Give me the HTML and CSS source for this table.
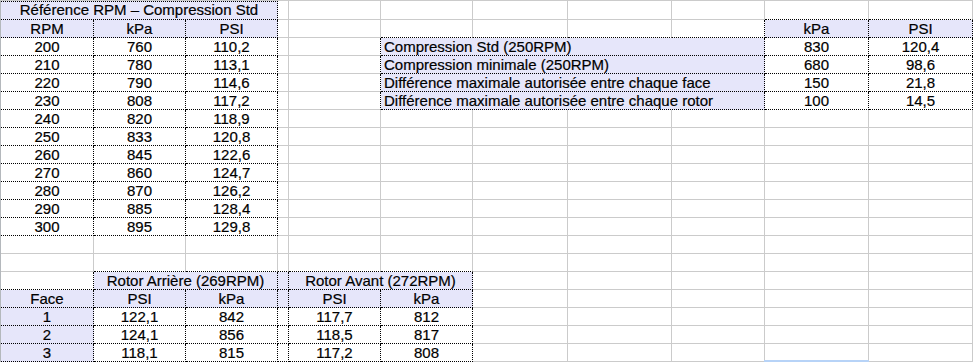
FILE: index.html
```html
<!DOCTYPE html>
<html lang="fr">
<head>
<meta charset="utf-8">
<title>Compression</title>
<link rel="stylesheet" href="styles.css">
</head>
<body>
<div class="sheet">
  <!-- row 1 -->
  <div class="c d t lav s3">Référence RPM – Compression Std</div>
  <div class="c"></div><div class="c"></div><div class="c"></div><div class="c"></div><div class="c"></div><div class="c"></div>
  <div class="c db"></div><div class="c db"></div>
  <!-- row 2 -->
  <div class="c d lav">RPM</div><div class="c d lav">kPa</div><div class="c d lav">PSI</div>
  <div class="c"></div><div class="c"></div>
  <div class="c db"></div><div class="c db"></div><div class="c db"></div><div class="c db dr"></div>
  <div class="c d lav">kPa</div><div class="c d lav">PSI</div>
  <!-- row 3 -->
  <div class="c d">200</div><div class="c d">760</div><div class="c d">110,2</div>
  <div class="c"></div><div class="c dr"></div>
  <div class="c d lav l s4">Compression Std (250RPM)</div>
  <div class="c d">830</div><div class="c d">120,4</div>
  <!-- row 4 -->
  <div class="c d">210</div><div class="c d">780</div><div class="c d">113,1</div>
  <div class="c"></div><div class="c dr"></div>
  <div class="c d lav l s4">Compression minimale (250RPM)</div>
  <div class="c d">680</div><div class="c d">98,6</div>
  <!-- row 5 -->
  <div class="c d">220</div><div class="c d">790</div><div class="c d">114,6</div>
  <div class="c"></div><div class="c dr"></div>
  <div class="c d lav l s4">Différence maximale autorisée entre chaque face</div>
  <div class="c d">150</div><div class="c d">21,8</div>
  <!-- row 6 -->
  <div class="c d">230</div><div class="c d">808</div><div class="c d">117,2</div>
  <div class="c"></div><div class="c dr"></div>
  <div class="c d lav l s4">Différence maximale autorisée entre chaque rotor</div>
  <div class="c d">100</div><div class="c d">14,5</div>
  <!-- row 7 -->
  <div class="c d">240</div><div class="c d">820</div><div class="c d">118,9</div>
  <div class="c"></div><div class="c"></div><div class="c"></div><div class="c"></div><div class="c"></div><div class="c"></div><div class="c"></div><div class="c"></div>
  <!-- row 8 -->
  <div class="c d">250</div><div class="c d">833</div><div class="c d">120,8</div>
  <div class="c"></div><div class="c"></div><div class="c"></div><div class="c"></div><div class="c"></div><div class="c"></div><div class="c"></div><div class="c"></div>
  <!-- row 9 -->
  <div class="c d">260</div><div class="c d">845</div><div class="c d">122,6</div>
  <div class="c"></div><div class="c"></div><div class="c"></div><div class="c"></div><div class="c"></div><div class="c"></div><div class="c"></div><div class="c"></div>
  <!-- row 10 -->
  <div class="c d">270</div><div class="c d">860</div><div class="c d">124,7</div>
  <div class="c"></div><div class="c"></div><div class="c"></div><div class="c"></div><div class="c"></div><div class="c"></div><div class="c"></div><div class="c"></div>
  <!-- row 11 -->
  <div class="c d">280</div><div class="c d">870</div><div class="c d">126,2</div>
  <div class="c"></div><div class="c"></div><div class="c"></div><div class="c"></div><div class="c"></div><div class="c"></div><div class="c"></div><div class="c"></div>
  <!-- row 12 -->
  <div class="c d">290</div><div class="c d">885</div><div class="c d">128,4</div>
  <div class="c"></div><div class="c"></div><div class="c"></div><div class="c"></div><div class="c"></div><div class="c"></div><div class="c"></div><div class="c"></div>
  <!-- row 13 -->
  <div class="c d">300</div><div class="c d">895</div><div class="c d">129,8</div>
  <div class="c"></div><div class="c"></div><div class="c"></div><div class="c"></div><div class="c"></div><div class="c"></div><div class="c"></div><div class="c"></div>
  <!-- row 14 -->
  <div class="c"></div><div class="c"></div><div class="c"></div><div class="c"></div><div class="c"></div><div class="c"></div><div class="c"></div><div class="c"></div><div class="c"></div><div class="c"></div><div class="c"></div>
  <!-- row 15 -->
  <div class="c"></div>
  <div class="c db"></div><div class="c db"></div><div class="c db"></div><div class="c db"></div><div class="c db"></div>
  <div class="c"></div><div class="c"></div><div class="c"></div><div class="c"></div><div class="c"></div>
  <!-- row 16 -->
  <div class="c dr db"></div>
  <div class="c d lav s2">Rotor Arrière (269RPM)</div>
  <div class="c d lav"></div>
  <div class="c d lav s2">Rotor Avant (272RPM)</div>
  <div class="c"></div><div class="c"></div><div class="c"></div><div class="c"></div><div class="c"></div>
  <!-- row 17 -->
  <div class="c d lav">Face</div><div class="c d lav">PSI</div><div class="c d lav">kPa</div>
  <div class="c d lav"></div>
  <div class="c d lav">PSI</div><div class="c d lav">kPa</div>
  <div class="c"></div><div class="c"></div><div class="c"></div><div class="c"></div><div class="c"></div>
  <!-- row 18 -->
  <div class="c d lav">1</div><div class="c d">122,1</div><div class="c d">842</div>
  <div class="c d"></div>
  <div class="c d">117,7</div><div class="c d">812</div>
  <div class="c"></div><div class="c"></div><div class="c"></div><div class="c"></div><div class="c"></div>
  <!-- row 19 -->
  <div class="c d lav">2</div><div class="c d">124,1</div><div class="c d">856</div>
  <div class="c d"></div>
  <div class="c d">118,5</div><div class="c d">817</div>
  <div class="c"></div><div class="c"></div><div class="c"></div><div class="c"></div><div class="c"></div>
  <!-- row 20 -->
  <div class="c d lav">3</div><div class="c d">118,1</div><div class="c d">815</div>
  <div class="c d"></div>
  <div class="c d">117,2</div><div class="c d">808</div>
  <div class="c"></div><div class="c"></div><div class="c"></div><div class="c sel"></div><div class="c"></div>
</div>
</body>
</html>
```

FILE: styles.css
```css
html, body {
  margin: 0;
  padding: 0;
  background: #ffffff;
  overflow: hidden;
}

.sheet {
  display: grid;
  grid-template-columns: 93px 92px 92px 11px 92px 92px 95px 104px 93px 104px 104px;
  grid-template-rows: 19px repeat(19, 18px);
  width: 973px;
  box-sizing: border-box;
  border-top: 1px solid #cbcbcb;
  border-left: 1px solid #b4b8bc;
  font-family: "Liberation Sans", Arial, sans-serif;
  font-size: 15px;
  color: #000000;
  -webkit-text-stroke: 0.2px #000000;
}

.c {
  box-sizing: border-box;
  border-right: 1px solid #cbcbcb;
  border-bottom: 1px solid #cbcbcb;
  line-height: 17px;
  text-align: center;
  white-space: nowrap;
  overflow: hidden;
  position: relative;
}

.d {
  border-right: 1px dotted #000000;
  border-bottom: 1px dotted #000000;
}

.dr {
  border-right: 1px dotted #000000;
}

.db {
  border-bottom: 1px dotted #000000;
}

.t {
  border-top: 1px dotted #000000;
  line-height: 16px;
}

.lav {
  background: #e6e6fa;
}

.l {
  text-align: left;
  padding-left: 3px;
}

.s2 { grid-column: span 2; }
.s3 { grid-column: span 3; }
.s4 { grid-column: span 4; }

.sel {
  overflow: visible;
}

.sel::after {
  content: "";
  position: absolute;
  left: -1px;
  right: -1px;
  bottom: -1px;
  height: 2px;
  background: #b7d3f7;
}
```
